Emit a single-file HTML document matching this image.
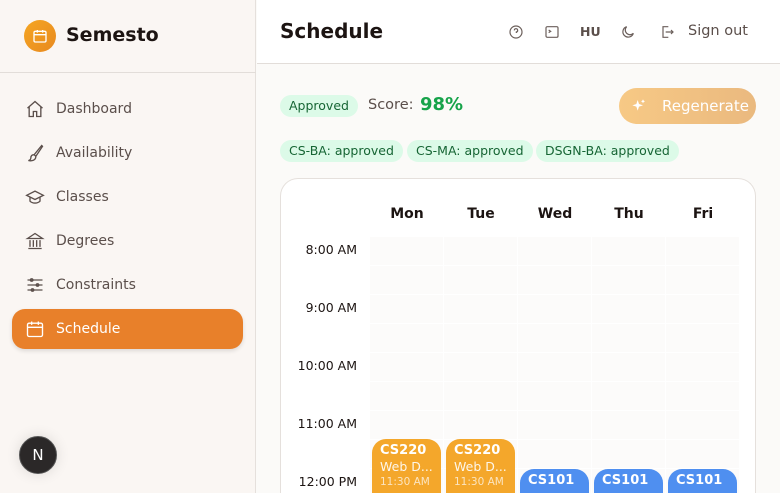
<!DOCTYPE html>
<html><head><meta charset="utf-8"><style>
*{box-sizing:border-box;margin:0;padding:0}
html,body{width:780px;height:493px;overflow:hidden}
body{font-family:"DejaVu Sans","Liberation Sans",sans-serif;background:#fbfaf8;position:relative}
#wrap{position:absolute;left:0;top:0;width:780px;height:493px;overflow:hidden}
.side{position:absolute;left:0;top:0;width:256px;height:493px;background:#faf6f3;border-right:1px solid #e5e0dc}
.logo{position:absolute;left:24px;top:20px;width:32px;height:32px;border-radius:50%;background:linear-gradient(135deg,#f5a623,#e8891f);display:flex;align-items:center;justify-content:center}
.brand{position:absolute;left:66px;top:24px;font-size:19px;font-weight:bold;color:#1c1412}
.sep{position:absolute;left:0;top:72px;width:256px;border-top:1px solid #e2ddd9}
.nav{position:absolute;left:12px;width:231px;height:40px;border-radius:13px;display:flex;align-items:center;font-size:14px;color:#5b4f4b}
.nav svg{position:absolute;left:13px}
.nav span{position:absolute;left:44px}
.nav.act{background:#e8802a;color:#fff;box-shadow:0 2px 4px rgba(0,0,0,.12)}
.nbtn{position:absolute;left:19px;top:436px;width:38px;height:38px;border-radius:50%;background:#2b2828;border:1.5px solid #555;color:#fff;font-size:15px;display:flex;align-items:center;justify-content:center;box-shadow:0 0 14px rgba(0,0,0,.12)}
.hdr{position:absolute;left:257px;top:0;width:523px;height:64px;background:#fff;border-bottom:1px solid #e2ddd9}
.title{position:absolute;left:280px;top:19px;font-size:20px;font-weight:bold;color:#1c1412}
.hi{position:absolute;top:24px}
.pill{position:absolute;height:22px;border-radius:11px;background:#dcfae8;color:#166534;font-size:12.5px;line-height:22px;padding:0 9px;white-space:nowrap}
.regen{position:absolute;left:619px;top:88px;width:137px;height:36px;border-radius:18px;background:linear-gradient(90deg,#f7c985,#eab97f);color:#fff;font-size:15px;line-height:36px}
.card{position:absolute;left:280px;top:178px;width:476px;height:315px;background:#fff;border:1px solid #e5e0dc;border-bottom:none;border-radius:18px 18px 0 0}
.day{position:absolute;top:206px;width:74px;text-align:center;font-weight:bold;font-size:14px;color:#1c1412}
.tm{position:absolute;left:290px;width:67px;text-align:right;font-size:12.5px;color:#1c1412}
.cell{position:absolute;width:73px;height:28px;background:#fcfbfa}
.ev{position:absolute;width:69px;border-radius:14px 14px 0 0;color:#fff;padding:4px 8px;overflow:hidden}
.ev b{display:block;font-size:13px;line-height:15px}
.ev i{font-style:normal;display:block;font-size:12.5px;line-height:17px;opacity:.9}
.ev small{display:block;font-size:10.5px;opacity:.7;line-height:15px}
</style></head><body><div id="wrap">
<div class="side">
<div class="logo"><svg width="16" height="16" viewBox="0 0 24 24" fill="none" stroke="#fff" stroke-width="2"><rect x="3" y="5" width="18" height="16" rx="2"/><path d="M8 3v4M16 3v4M3 10h18"/></svg></div>
<div class="brand">Semesto</div>
<div class="sep"></div>
<div class="nav" style="top:89px"><svg width="20" height="20" viewBox="0 0 24 24" fill="none" stroke="#5b4f4b" stroke-width="1.6"><path d="M3 11l9-8 9 8M5 9v12h5v-6h4v6h5V9"/></svg><span>Dashboard</span></div>
<div class="nav" style="top:133px"><svg width="20" height="20" viewBox="0 0 24 24" fill="none" stroke="#5b4f4b" stroke-width="1.6"><path d="M20 3l-9 11 2 2 8-12zM11 14c-3 0-4 2-4 4 0 2-2 3-3 3 4 1 9 0 9-5"/></svg><span>Availability</span></div>
<div class="nav" style="top:177px"><svg width="20" height="20" viewBox="0 0 24 24" fill="none" stroke="#5b4f4b" stroke-width="1.6"><path d="M2 10l10-5 10 5-10 5zM6 12v5c3 3 9 3 12 0v-5"/></svg><span>Classes</span></div>
<div class="nav" style="top:221px"><svg width="20" height="20" viewBox="0 0 24 24" fill="none" stroke="#5b4f4b" stroke-width="1.6"><path d="M3 9l9-6 9 6zM4 21h16M6 11v8M10 11v8M14 11v8M18 11v8"/></svg><span>Degrees</span></div>
<div class="nav" style="top:265px"><svg width="20" height="20" viewBox="0 0 24 24" fill="none" stroke="#5b4f4b" stroke-width="1.6"><path d="M3 6h18M3 12h18M3 18h18"/><circle cx="8" cy="6" r="1.5"/><circle cx="15" cy="12" r="1.5"/><circle cx="9" cy="18" r="1.5"/></svg><span>Constraints</span></div>
<div class="nav act" style="top:309px"><svg width="20" height="20" viewBox="0 0 24 24" fill="none" stroke="#fff" stroke-width="1.6"><rect x="3" y="5" width="18" height="16" rx="2"/><path d="M8 3v4M16 3v4M3 10h18"/></svg><span>Schedule</span></div>
<div class="nbtn">N</div>
</div>
<div class="hdr"></div>
<div class="title">Schedule</div>
<svg class="hi" style="left:508px" width="16" height="16" viewBox="0 0 24 24" fill="none" stroke="#6b5f5b" stroke-width="1.8"><circle cx="12" cy="12" r="9"/><path d="M9.5 9.5a2.5 2.5 0 1 1 3 2.5v1.5M12 17h.01"/></svg>
<svg class="hi" style="left:544px" width="16" height="16" viewBox="0 0 24 24" fill="none" stroke="#6b5f5b" stroke-width="1.8"><rect x="3" y="4" width="18" height="16" rx="2"/><path d="M7 9l3 2-3 2"/></svg>
<div style="position:absolute;left:580px;top:24px;font-size:12.5px;font-weight:bold;color:#5b4f4b">HU</div>
<svg class="hi" style="left:620px" width="16" height="16" viewBox="0 0 24 24" fill="none" stroke="#6b5f5b" stroke-width="1.8"><path d="M20 14A8 8 0 1 1 10 4a7 7 0 0 0 10 10z"/></svg>
<svg class="hi" style="left:659px" width="16" height="16" viewBox="0 0 24 24" fill="none" stroke="#6b5f5b" stroke-width="1.8"><path d="M14 4H6v16h8M10 12h11M18 9l3 3-3 3"/></svg>
<div style="position:absolute;left:688px;top:23px;font-size:14.5px;color:#5b4f4b">Sign out</div>
<div class="pill" style="left:280px;top:95px">Approved</div>
<div style="position:absolute;left:368px;top:97px;font-size:14.5px;color:#5b4f4b">Score:</div>
<div style="position:absolute;left:420px;top:94px;font-size:18px;font-weight:bold;color:#16a34a">98%</div>
<div class="regen"><svg style="position:absolute;left:12px;top:10px" width="16" height="16" viewBox="0 0 24 24" fill="#fff"><path d="M10 3l2 6 6 2-6 2-2 6-2-6-6-2 6-2zM18 2l1 2 2 1-2 1-1 2-1-2-2-1 2-1z"/></svg><span style="position:absolute;left:43px">Regenerate</span></div>
<div class="pill" style="left:280px;top:140px">CS-BA: approved</div>
<div class="pill" style="left:407px;top:140px">CS-MA: approved</div>
<div class="pill" style="left:536px;top:140px">DSGN-BA: approved</div>
<div class="card"></div>
<div class="day" style="left:370px">Mon</div><div class="day" style="left:444px">Tue</div><div class="day" style="left:518px">Wed</div><div class="day" style="left:592px">Thu</div><div class="day" style="left:666px">Fri</div>
<div class="tm" style="top:242px">8:00 AM</div><div class="tm" style="top:300px">9:00 AM</div><div class="tm" style="top:358px">10:00 AM</div><div class="tm" style="top:416px">11:00 AM</div><div class="tm" style="top:474px">12:00 PM</div>
<div id="g"></div>
<script>
var g='';for(var r=0;r<9;r++)for(var c=0;c<5;c++)g+='<div class="cell" style="left:'+(370+74*c)+'px;top:'+(237+29*r)+'px;height:'+Math.min(28,493-(237+29*r))+'px"></div>';document.getElementById('g').innerHTML=g;
</script>
<div class="ev" style="left:372px;top:439px;height:54px;background:#f4a72b"><b>CS220</b><i>Web D...</i><small>11:30 AM</small></div>
<div class="ev" style="left:446px;top:439px;height:54px;background:#f4a72b"><b>CS220</b><i>Web D...</i><small>11:30 AM</small></div>
<div class="ev" style="left:520px;top:469px;height:24px;background:#4f8ff0"><b>CS101</b></div>
<div class="ev" style="left:594px;top:469px;height:24px;background:#4f8ff0"><b>CS101</b></div>
<div class="ev" style="left:668px;top:469px;height:24px;background:#4f8ff0"><b>CS101</b></div>
</div></body></html>
